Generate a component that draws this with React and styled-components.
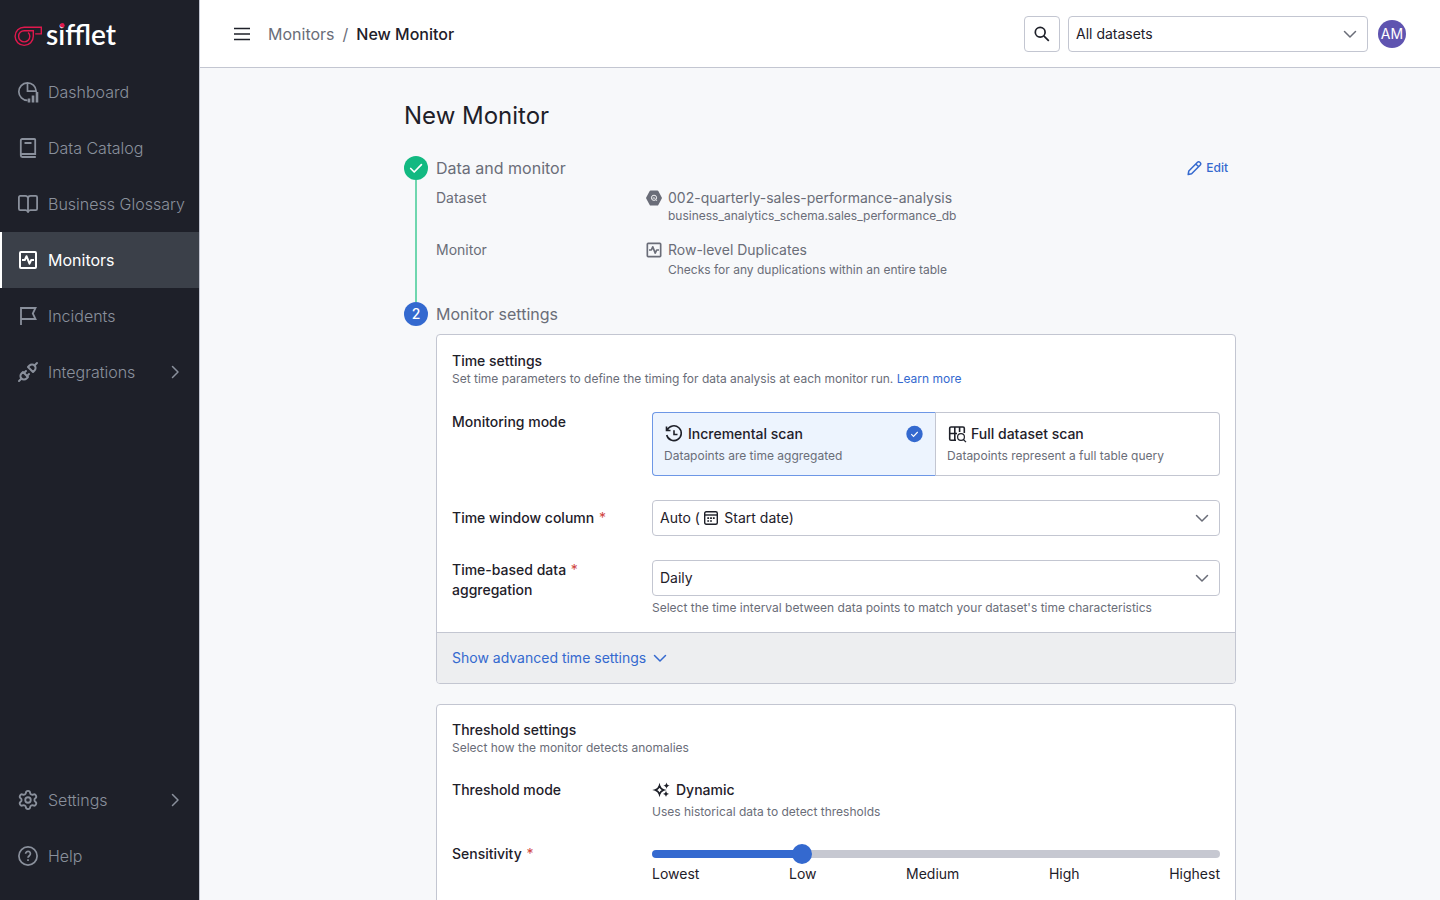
import React, { useState } from "react";
import styled, { createGlobalStyle, css } from "styled-components";
import { Settings } from "lucide-react";
import { TbPlugConnected } from "react-icons/tb";

const c = {
  ink: "#1e2029",
  grey: "#6a6d78",
  line: "#c3c6d1",
  blue: "#3469cf",
  side: "#1e2029",
  sideText: "#8a909c",
  page: "#f7f8fa",
};

const GlobalStyle = createGlobalStyle`
  *, *::before, *::after { box-sizing: border-box; }
  body { margin: 0; }
  body, button, input, select {
    font-family: Inter, "Open Sans", sans-serif;
    font-size: 14px;
    line-height: 20px;
    color: ${c.ink};
  }
  button { background: none; border: 0; padding: 0; cursor: pointer; }
  a { text-decoration: none; color: inherit; }
  h1, h2, h3, p, dl, dd, dt, ul, ol { margin: 0; padding: 0; list-style: none; font-weight: 400; }
  svg { display: block; flex: none; }
`;

const Shell = styled.div`
  display: flex;
  height: 100vh;
`;

const Sidebar = styled.nav`
  display: flex;
  flex-direction: column;
  flex: 0 0 200px;
  min-width: 0;
  background: ${c.side};
  border-right: 1px solid ${c.line};
`;

const Brand = styled.a`
  height: 64px;
  padding: 12px 0 0 14px;
`;

const NavList = styled.ul`
  margin-bottom: ${(p) => (p.$bottom ? "16px" : "0")};
  margin-top: ${(p) => (p.$bottom ? "auto" : "0")};
`;

const NavLink = styled.a`
  display: flex;
  align-items: center;
  gap: 8px;
  height: 56px;
  padding: 0 16px;
  font-size: 16px;
  font-weight: 300;
  white-space: nowrap;
  color: ${c.sideText};
  ${(p) =>
    p.$active &&
    css`
      background: #3b4049;
      color: #fff;
      font-weight: 400;
      border-left: 2px solid #fff;
      padding-left: 14px;
    `}
`;

const Main = styled.div`
  flex: 1;
  min-width: 0;
  display: flex;
  flex-direction: column;
  background: ${c.page};
`;

const TopBar = styled.header`
  display: flex;
  align-items: center;
  flex: 0 0 68px;
  padding: 0 34px;
  background: #fff;
  border-bottom: 1px solid ${c.line};
`;

const Crumbs = styled.nav`
  display: flex;
  gap: 8px;
  margin-left: 18px;
  font-size: 16px;
  color: ${c.grey};
  strong { font-weight: 500; color: ${c.ink}; }
`;

const Tools = styled.div`
  display: flex;
  align-items: center;
  gap: 8px;
  margin-left: auto;
`;

const SearchButton = styled.button`
  display: grid;
  place-items: center;
  width: 36px;
  height: 36px;
  border: 1px solid ${c.line};
  border-radius: 4px;
`;

const Avatar = styled.button`
  width: 28px;
  height: 28px;
  margin-left: 2px;
  border-radius: 50%;
  background: #5f54b0;
  color: #fff;
  text-align: center;
`;

const SelectBox = styled.div`
  position: relative;
  width: ${(p) => p.$width || "100%"};
  > svg { position: absolute; right: 10px; top: 10px; pointer-events: none; }
`;

const SelectInput = styled.select`
  display: block;
  width: 100%;
  height: 36px;
  padding: 0 32px 0 7px;
  appearance: none;
  background: #fff;
  border: 1px solid ${c.line};
  border-radius: 4px;
`;

const ValueIcon = styled.span`
  position: absolute;
  left: 52px;
  top: 11px;
  pointer-events: none;
`;

const Scroller = styled.main`
  flex: 1;
  min-height: 0;
  overflow-y: auto;
  scrollbar-width: none;
  padding: 32px 24px;
`;

const Content = styled.div`
  max-width: 832px;
  margin: 0 auto;
`;

const Title = styled.h1`
  font-size: 24px;
  line-height: 32px;
`;

const Steps = styled.ol`
  margin-top: 24px;
`;

const Step = styled.li`
  display: flex;
  gap: 8px;
`;

const Rail = styled.div`
  display: flex;
  flex-direction: column;
  align-items: center;
  flex: 0 0 24px;
  &::after {
    content: "";
    flex: 1;
    width: 2px;
    background: ${(p) => (p.$done ? "#6fd6ae" : "transparent")};
  }
`;

const Dot = styled.span`
  display: grid;
  place-items: center;
  width: 24px;
  height: 24px;
  border-radius: 50%;
  font-weight: 500;
  color: #fff;
  background: ${(p) => (p.$done ? "#12b981" : c.blue)};
`;

const StepBody = styled.div`
  flex: 1;
  min-width: 0;
  padding-bottom: 24px;
`;

const StepHead = styled.div`
  display: flex;
  align-items: center;
  justify-content: space-between;
  height: 24px;
  margin-bottom: 8px;
  padding-right: 8px;
  h2 { font-size: 16px; color: ${c.grey}; }
`;

const EditButton = styled.button`
  display: flex;
  align-items: center;
  gap: 4px;
  font-size: 12px;
  font-weight: 500;
  color: ${c.blue};
`;

const Summary = styled.dl`
  display: grid;
  gap: 16px;
  color: ${c.grey};
  > div { display: flex; }
  dt { flex: 0 0 208px; }
`;

const SummaryValue = styled.dd`
  display: grid;
  grid-template-columns: 20px 1fr;
  column-gap: 4px;
  row-gap: ${(p) => (p.$loose ? "2px" : "0")};
  align-items: center;
  justify-items: start;
`;

const Note = styled.p`
  font-size: 12px;
  line-height: 16px;
  color: ${c.grey};
  grid-column: ${(p) => (p.$inset ? 2 : "auto")};
  margin-top: ${(p) => (p.$spaced ? "4px" : "0")};
`;

const TextLink = styled.a`
  color: ${c.blue};
`;

const Card = styled.section`
  background: #fff;
  border: 1px solid ${c.line};
  border-radius: 4px;
  overflow: hidden;
  & + & { margin-top: 20px; }
`;

const CardBody = styled.div`
  padding: ${(p) => (p.$tight ? "15px 15px 24px" : "16px 15px")};
`;

const CardHead = styled.div`
  margin-bottom: ${(p) => (p.$tight ? "24px" : "25px")};
`;

const CardTitle = styled.h3`
  font-size: 14px;
  font-weight: 500;
`;

const Fields = styled.div`
  display: grid;
  gap: 24px;
`;

const FieldRow = styled.div`
  display: flex;
  align-items: ${(p) => (p.$center ? "center" : "flex-start")};
`;

const FieldLabel = styled.label`
  flex: 0 0 200px;
  font-weight: 500;
`;

const Star = styled.span`
  margin-left: 1px;
  font-weight: 400;
  color: #d0453f;
`;

const Field = styled.div`
  flex: 1;
  min-width: 0;
`;

const ModeGroup = styled.div`
  display: grid;
  grid-template-columns: 1fr 1fr;
`;

const ModeCard = styled.label`
  position: relative;
  height: 64px;
  padding: 11px;
  border: 1px solid ${c.line};
  border-radius: ${(p) => (p.$first ? "4px 0 0 4px" : "0 4px 4px 0")};
  border-left-width: ${(p) => (p.$first ? "1px" : "0")};
  cursor: pointer;
  ${(p) =>
    p.$on &&
    css`
      background: #edf4fe;
      border-color: #6d97e6 ${c.line} #6d97e6 #6d97e6;
    `}
`;

const HiddenRadio = styled.input`
  position: absolute;
  inset: 0;
  margin: 0;
  opacity: 0;
`;

const IconLine = styled.div`
  display: flex;
  align-items: center;
  gap: 4px;
  font-weight: 500;
  svg:nth-of-type(2) { margin-left: auto; }
`;

const CardFooter = styled.div`
  padding: 15px;
  background: #edeef0;
  border-top: 1px solid ${c.line};
`;

const MoreButton = styled.button`
  display: flex;
  align-items: center;
  gap: 6px;
  color: ${c.blue};
`;

const Slider = styled.input`
  display: block;
  width: 100%;
  height: 20px;
  margin: 0;
  appearance: none;
  background: none;
  &::-webkit-slider-runnable-track {
    height: 8px;
    border-radius: 4px;
    background: linear-gradient(to right, ${c.blue} 26%, #c6c8d1 26%);
  }
  &::-webkit-slider-thumb {
    appearance: none;
    width: 20px;
    height: 20px;
    margin-top: -6px;
    border-radius: 50%;
    background: ${c.blue};
  }
`;

const Scale = styled.div`
  display: flex;
  justify-content: space-between;
`;

const Chevron = ({ dir = "down", color = c.grey }) => (
  <svg width="16" height="16" viewBox="0 0 16 16" fill="none" stroke={color} strokeWidth="1.5" strokeLinecap="round" strokeLinejoin="round">
    <path d={dir === "down" ? "M2.5 5.5 8 11l5.500-5.500" : "M5.500 2.500 11 8l-5.500 5.500"} />
  </svg>
);

const Logo = () => (
  <svg width="120" height="46" viewBox="0 -8 120 46" role="img" aria-label="sifflet">
    <g fill="none" stroke="#e0184d" strokeWidth="1.400">
      <path d="M21.200 13.900h6.100V7.200H10.200a9.100 9.100 0 1 0 9.100 9.100V10.700H10.200a5.600 5.600 0 1 0 5.600 5.600c0-1.600-.6-2.800-1.700-3.800" />
    </g>
    <text x="32" y="24.500" fill="#fff" fontFamily="Lato, sans-serif" fontSize="28" fontWeight="600">sifflet</text>
    <circle cx="48.300" cy="5.300" r="2.300" fill="#e0184d" />
  </svg>
);

const Svg24 = ({ children, size = 24, w = 1.7 }) => (
  <svg width={size} height={size} viewBox="0 0 24 24" fill="none" stroke="currentColor" strokeWidth={w}>
    {children}
  </svg>
);

const DashboardIcon = () => (
  <Svg24>
    <path d="M11.500 20.300A8.700 8.700 0 1 1 20.200 11.200H11.500V2.900" />
    <path d="M13 22.500v-4M17 22.500v-7M21 22.500V12" strokeWidth="2.600" />
  </Svg24>
);

const CatalogIcon = () => (
  <Svg24 w={1.8}>
    <path d="M19.800 21H6.200a1.400 1.400 0 0 1-1.400-1.400V4.400A1.400 1.400 0 0 1 6.200 3h12.200a.8.800 0 0 1 .8.800V18H6.400a1.500 1.500 0 0 0-1.500 1.500M8.500 7h7" />
  </Svg24>
);

const GlossaryIcon = () => (
  <Svg24 w={1.8}>
    <path d="M12 20c-.5-1-1.300-1.900-2.500-1.900H4.200A1.300 1.300 0 0 1 2.900 16.800V5.200a1.300 1.300 0 0 1 1.300-1.300h5.300A2.500 2.500 0 0 1 12 6.400a2.500 2.500 0 0 1 2.500-2.500h5.300a1.300 1.300 0 0 1 1.300 1.300v11.600a1.300 1.300 0 0 1-1.300 1.300h-5.300c-1.200 0-2 .9-2.500 1.900zM12 6v13.500" strokeLinejoin="round" />
  </Svg24>
);

const PulseIcon = ({ size = 24 }) => (
  <Svg24 size={size} w={2}>
    <rect x="4" y="4" width="16" height="16" rx="1" />
    <path d="M6 12h2.800l1.700-3.800 3 7.500 1.700-3.700H18" strokeLinejoin="round" />
  </Svg24>
);

const FlagIcon = () => (
  <Svg24 w={1.8}>
    <path d="M5 21V4h14.500l-2.700 5.500 2.700 5.500H5" />
  </Svg24>
);

const HelpIcon = () => (
  <Svg24>
    <circle cx="12" cy="12" r="9.100" />
    <path d="M9.600 9.700a2.400 2.400 0 1 1 3.900 1.900c-.9.700-1.500 1.100-1.500 2.200" />
    <path d="M12 15.300v1.800" />
  </Svg24>
);

const MenuIcon = () => (
  <svg width="16" height="14" viewBox="0 0 16 14" stroke={c.ink} strokeWidth="1.500">
    <path d="M0 1.500h16M0 7h16M0 12.500h16" />
  </svg>
);

const SearchIcon = () => (
  <svg width="16" height="16" viewBox="0 0 16 16" fill="none" stroke={c.ink} strokeWidth="1.700">
    <circle cx="6.200" cy="6.200" r="4.900" />
    <path d="m9.800 9.800 5 5" />
  </svg>
);

const CheckIcon = ({ size = 16 }) => (
  <svg width={size} height={size} viewBox="0 0 16 16" fill="none" stroke="#fff" strokeWidth="1.700" strokeLinecap="round" strokeLinejoin="round">
    <path d="m2.700 8.500 3.500 3.500 7.200-7.300" />
  </svg>
);

const PencilIcon = () => (
  <svg width="15" height="16" viewBox="0 0 15 16" fill="none" stroke={c.blue} strokeWidth="1.500" strokeLinejoin="round">
    <path d="m1.200 14.500.6-3.500 8.700-8.800a1.600 1.600 0 0 1 2.300 0l.5.500a1.600 1.600 0 0 1 0 2.300L4.600 13.800zM8.800 4l2.800 2.800" />
  </svg>
);

const BigQueryIcon = () => (
  <svg width="20" height="18" viewBox="0 0 20 18" fill="none">
    <path d="M6.500 1.500h7a1 1 0 0 1 .8.500l3.500 6.400a1 1 0 0 1 0 1l-3.500 6.500a1 1 0 0 1-.8.600h-7a1 1 0 0 1-.8-.6L2.200 9.500a1 1 0 0 1 0-1L5.700 2a1 1 0 0 1 .8-.5z" fill={c.grey} />
    <circle cx="10" cy="8.800" r="2.600" stroke="#fff" strokeWidth=".9" />
    <path d="m11.800 10.700 1.300 1.300M9 8.500v1.200M10 7.900v2M11 9v.8" stroke="#fff" strokeWidth=".7" />
  </svg>
);

const HistoryIcon = () => (
  <svg width="20" height="20" viewBox="0 0 20 20" fill="none" stroke={c.ink} strokeWidth="1.600">
    <path d="M2.500 2.500v4h4M3.200 6A7.400 7.400 0 1 1 2.700 11" />
    <path d="M10 6.200v4.300h3.500" />
  </svg>
);

const ScanIcon = () => (
  <svg width="20" height="20" viewBox="0 0 20 20" fill="none" stroke={c.ink} strokeWidth="1.600">
    <path d="M9 16.200H4a1.300 1.300 0 0 1-1.300-1.300V4.300A1.300 1.300 0 0 1 4 3h12a1.300 1.300 0 0 1 1.300 1.300V9M2.700 9.500H10M7.800 3v13M12.600 3v5" />
    <circle cx="14" cy="13" r="3.400" strokeWidth="1.200" />
    <path d="m16.400 15.500 2.600 2.700" strokeWidth="1.200" />
  </svg>
);

const CalendarIcon = () => (
  <svg width="14" height="14" viewBox="0 0 14 14" fill="none" stroke={c.ink} strokeWidth="1.400">
    <rect x=".7" y=".7" width="12.600" height="12.600" rx="1.500" />
    <path d="M1 4h12" />
    <path d="M3.300 7.100h1.800M6.100 7.100h1.800M8.900 7.100h1.800M3.300 10h1.800M6.100 10h1.800" strokeWidth="1.700" />
  </svg>
);

const SparkIcon = () => (
  <svg width="20" height="20" viewBox="0 0 20 20" fill={c.ink}>
    <path d="M7.500 5.700C8.300 8.300 9.200 9.200 11.800 10c-2.600.8-3.500 1.700-4.300 4.300C6.700 11.700 5.800 10.800 3.200 10c2.600-.8 3.500-1.700 4.300-4.300z" fill="none" stroke={c.ink} strokeWidth="1.700" />
    <path d="M14.500 2.500c.5 2.200 1.100 2.800 3.200 3.200-2.100.4-2.700 1-3.200 3.200-.5-2.200-1.100-2.800-3.200-3.200 2.100-.4 2.700-1 3.200-3.200zM14 10.700c.5 2.200 1.100 2.800 3.200 3.200-2.100.4-2.700 1-3.200 3.200-.5-2.200-1.100-2.800-3.200-3.200 2.100-.4 2.700-1 3.200-3.200z" />
  </svg>
);

const SelectedIcon = () => (
  <svg width="18" height="18" viewBox="0 0 18 18" fill="none">
    <circle cx="8.500" cy="9" r="8.200" fill={c.blue} />
    <path d="m5.300 9.200 2.200 2.200 4.200-4.400" stroke="#fff" strokeWidth="1.100" />
  </svg>
);

const IconSlot = styled.span`
  display: grid;
  place-items: center;
  width: 24px;
  flex: none;
`;

const primaryNav = [
  { label: "Dashboard", icon: <DashboardIcon /> },
  { label: "Data Catalog", icon: <CatalogIcon /> },
  { label: "Business Glossary", icon: <GlossaryIcon /> },
  { label: "Monitors", icon: <PulseIcon />, active: true },
  { label: "Incidents", icon: <FlagIcon /> },
  { label: "Integrations", icon: <TbPlugConnected size={24} />, more: true },
];

const secondaryNav = [
  { label: "Settings", icon: <Settings size={22} strokeWidth={2} />, more: true },
  { label: "Help", icon: <HelpIcon /> },
];

const NavChevron = styled.span`
  margin-left: auto;
`;

const Nav = ({ items, bottom }) => (
  <NavList $bottom={bottom}>
    {items.map((it) => (
      <li key={it.label}>
        <NavLink href="#" $active={it.active} aria-current={it.active ? "page" : undefined}>
          <IconSlot>{it.icon}</IconSlot>
          {it.label}
          {it.more && (
            <NavChevron>
              <Chevron dir="right" color={c.sideText} />
            </NavChevron>
          )}
        </NavLink>
      </li>
    ))}
  </NavList>
);

const modes = [
  { id: "incremental", title: "Incremental scan", note: "Datapoints are time aggregated", icon: <HistoryIcon /> },
  { id: "full", title: "Full dataset scan", note: "Datapoints represent a full table query", icon: <ScanIcon /> },
];

export default function App() {
  const [mode, setMode] = useState("incremental");
  return (
    <>
      <GlobalStyle />
      <Shell>
        <Sidebar aria-label="Main">
          <Brand href="#"><Logo /></Brand>
          <Nav items={primaryNav} />
          <Nav items={secondaryNav} bottom />
        </Sidebar>
        <Main>
          <TopBar>
            <button aria-label="Toggle menu"><MenuIcon /></button>
            <Crumbs aria-label="Breadcrumb">
              <a href="#">Monitors</a>
              <span>/</span>
              <strong>New Monitor</strong>
            </Crumbs>
            <Tools>
              <SearchButton aria-label="Search"><SearchIcon /></SearchButton>
              <SelectBox $width="300px">
                <SelectInput aria-label="Datasets"><option>All datasets</option></SelectInput>
                <Chevron />
              </SelectBox>
              <Avatar>AM</Avatar>
            </Tools>
          </TopBar>
          <Scroller>
            <Content>
              <Title>New Monitor</Title>
              <Steps>
                <Step>
                  <Rail $done><Dot $done><CheckIcon /></Dot></Rail>
                  <StepBody>
                    <StepHead>
                      <h2>Data and monitor</h2>
                      <EditButton><PencilIcon />Edit</EditButton>
                    </StepHead>
                    <Summary>
                      <div>
                        <dt>Dataset</dt>
                        <SummaryValue>
                          <BigQueryIcon />
                          <span>002-quarterly-sales-performance-analysis</span>
                          <Note as="span" $inset>business_analytics_schema.sales_performance_db</Note>
                        </SummaryValue>
                      </div>
                      <div>
                        <dt>Monitor</dt>
                        <SummaryValue $loose>
                          <PulseIcon size={20} />
                          <span>Row-level Duplicates</span>
                          <Note as="span" $inset>Checks for any duplications within an entire table</Note>
                        </SummaryValue>
                      </div>
                    </Summary>
                  </StepBody>
                </Step>
                <Step>
                  <Rail><Dot>2</Dot></Rail>
                  <StepBody>
                    <StepHead><h2>Monitor settings</h2></StepHead>
                    <Card>
                      <CardBody>
                        <CardHead>
                          <CardTitle>Time settings</CardTitle>
                          <Note>
                            Set time parameters to define the timing for data analysis at each monitor run.{" "}
                            <TextLink href="#">Learn more</TextLink>
                          </Note>
                        </CardHead>
                        <Fields>
                          <FieldRow>
                            <FieldLabel as="span" id="mode-label">Monitoring mode</FieldLabel>
                            <Field>
                              <ModeGroup role="radiogroup" aria-labelledby="mode-label">
                                {modes.map((m, i) => (
                                  <ModeCard key={m.id} $first={i === 0} $on={mode === m.id}>
                                    <HiddenRadio type="radio" name="mode" checked={mode === m.id} onChange={() => setMode(m.id)} />
                                    <IconLine>
                                      {m.icon}
                                      {m.title}
                                      {mode === m.id && <SelectedIcon />}
                                    </IconLine>
                                    <Note $spaced>{m.note}</Note>
                                  </ModeCard>
                                ))}
                              </ModeGroup>
                            </Field>
                          </FieldRow>
                          <FieldRow $center>
                            <FieldLabel htmlFor="window">Time window column <Star>*</Star></FieldLabel>
                            <Field>
                              <SelectBox>
                                <SelectInput id="window"><option>{"Auto (\u2003\u2002\u2005Start date)"}</option></SelectInput>
                                <ValueIcon><CalendarIcon /></ValueIcon>
                                <Chevron />
                              </SelectBox>
                            </Field>
                          </FieldRow>
                          <FieldRow>
                            <FieldLabel htmlFor="aggregation">
                              Time-based data <Star>*</Star>
                              <br />
                              aggregation
                            </FieldLabel>
                            <Field>
                              <SelectBox>
                                <SelectInput id="aggregation"><option>Daily</option></SelectInput>
                                <Chevron />
                              </SelectBox>
                              <Note $spaced>Select the time interval between data points to match your dataset's time characteristics</Note>
                            </Field>
                          </FieldRow>
                        </Fields>
                      </CardBody>
                      <CardFooter>
                        <MoreButton>Show advanced time settings <Chevron color={c.blue} /></MoreButton>
                      </CardFooter>
                    </Card>
                    <Card>
                      <CardBody $tight>
                        <CardHead $tight>
                          <CardTitle>Threshold settings</CardTitle>
                          <Note>Select how the monitor detects anomalies</Note>
                        </CardHead>
                        <Fields>
                          <FieldRow>
                            <FieldLabel as="span">Threshold mode</FieldLabel>
                            <Field>
                              <IconLine><SparkIcon />Dynamic</IconLine>
                              <Note $spaced>Uses historical data to detect thresholds</Note>
                            </Field>
                          </FieldRow>
                          <FieldRow>
                            <FieldLabel htmlFor="sensitivity">Sensitivity <Star>*</Star></FieldLabel>
                            <Field>
                              <Slider id="sensitivity" type="range" min="0" max="100" step="0.5" defaultValue="25.5" />
                              <Scale>
                                <span>Lowest</span><span>Low</span><span>Medium</span><span>High</span><span>Highest</span>
                              </Scale>
                            </Field>
                          </FieldRow>
                        </Fields>
                      </CardBody>
                    </Card>
                  </StepBody>
                </Step>
              </Steps>
            </Content>
          </Scroller>
        </Main>
      </Shell>
    </>
  );
}
